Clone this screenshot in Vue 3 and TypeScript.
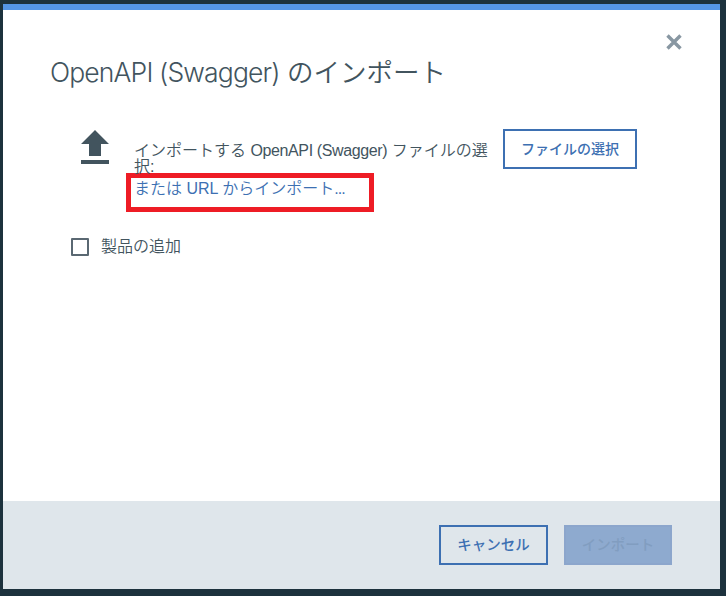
<script setup lang="ts">
import { ref } from 'vue';

const addProduct = ref(false);
const canImport = ref(false);
</script>

<template>
  <div class="backdrop">
    <div class="modal" role="dialog" aria-labelledby="modal-title">
      <header class="modal__header">
        <h1 id="modal-title" class="modal__title">
          <span class="modal__title-latin">OpenAPI (Swagger)</span> のインポート
        </h1>
        <button type="button" class="modal__close" aria-label="閉じる">
          <svg width="16" height="16" viewBox="0 0 16 16">
            <path d="M1.5 1.5L14.5 14.5M14.5 1.5L1.5 14.5" />
          </svg>
        </button>
      </header>

      <main class="modal__body">
        <div class="upload">
          <svg class="upload__icon" width="28" height="34" viewBox="0 0 28 34">
            <path d="M14 0L28 14H20V26H8V14H0Z" />
            <path d="M0 30H28V34H0Z" />
          </svg>
          <div class="upload__text">
            <p class="upload__label">
              インポートする <span class="upload__latin">OpenAPI (Swagger)</span> ファイルの選<br />択:
            </p>
            <div class="upload__highlight">
              <a class="upload__link">または URL からインポート<span class="upload__dots">...</span></a>
            </div>
          </div>
          <button type="button" class="button button--file">ファイルの選択</button>
        </div>

        <label class="product">
          <input v-model="addProduct" type="checkbox" class="product__checkbox" />
          <span>製品の追加</span>
        </label>
      </main>

      <footer class="modal__footer">
        <button type="button" class="button button--cancel">キャンセル</button>
        <button type="button" class="button button--import" :disabled="!canImport">インポート</button>
      </footer>
    </div>
  </div>
</template>

<style>
body {
  margin: 0;
  overflow: hidden;
}
</style>

<style scoped>
.backdrop {
  box-sizing: border-box;
  width: 726px;
  height: 596px;
  padding: 4px 6px 7px 3px;
  background: #1d323d;
  font-family: "Liberation Sans", "Noto Sans CJK JP", sans-serif;
  color: #42545e;
}

.modal {
  box-sizing: border-box;
  display: flex;
  flex-direction: column;
  height: 585px;
  border-top: 6px solid #5596e6;
  background: #fff;
}

.modal__header {
  display: flex;
  justify-content: space-between;
  padding: 24px 38px 0 47px;
}

.modal__title {
  margin: 18px 0 0;
  font-family: Inter, "Noto Sans CJK JP", sans-serif;
  font-size: 26.5px;
  font-weight: 350;
  line-height: 40px;
  white-space: nowrap;
}

.modal__title-latin {
  font-weight: 300;
  letter-spacing: -0.85px;
}

.modal__close {
  width: 16px;
  height: 16px;
  padding: 0;
  border: 0;
  background: none;
  cursor: pointer;
}

.modal__close svg {
  display: block;
  fill: none;
  stroke: #8897a2;
  stroke-width: 3.4;
}

.modal__body {
  flex: 1;
  padding: 37px 48px 0 68px;
}

.upload {
  display: flex;
  align-items: flex-start;
}

.upload__icon {
  flex: none;
  margin: 1px 0 0 10px;
  fill: #42545e;
}

.upload__text {
  width: 369px;
  margin: 14px 0 0 17px;
}

.upload__label {
  width: 358px;
  margin: 0 0 0 8px;
  font-size: 16px;
  font-weight: 350;
  line-height: 16px;
  white-space: nowrap;
}

.upload__latin {
  letter-spacing: -0.38px;
}

.upload__highlight {
  box-sizing: border-box;
  width: 248px;
  height: 39px;
  margin-top: -2px;
  padding: 3px 3px 0;
  border: 5px solid #ee1c25;
}

.upload__link {
  display: block;
  color: #3d70b2;
  font-size: 16px;
  font-weight: 350;
  line-height: 16px;
  white-space: nowrap;
  cursor: pointer;
}

.upload__dots {
  letter-spacing: -1px;
}

.button {
  box-sizing: border-box;
  height: 40px;
  padding: 0 0 3px;
  border: 2px solid #3d70b2;
  background: transparent;
  color: #3d70b2;
  font-family: "Noto Sans CJK JP", sans-serif;
  font-size: 14px;
  font-weight: 500;
  white-space: nowrap;
}

.button--file {
  flex: none;
  width: 134px;
  margin-left: 8px;
}

.button--cancel {
  width: 109px;
  font-size: 14.5px;
}

.button--import {
  width: 108px;
  border-color: #8ca6cc;
  background: #8eaacf;
  color: #819dc0;
  font-size: 14.5px;
}

.product {
  display: inline-flex;
  align-items: center;
  gap: 12px;
  margin-top: 25px;
  font-size: 16px;
  font-weight: 350;
  line-height: 20px;
}

.product__checkbox {
  appearance: none;
  box-sizing: border-box;
  width: 18px;
  height: 18px;
  margin: 0;
  border: 2px solid #5a6872;
  border-radius: 1px;
  background: #fff;
}

.modal__footer {
  box-sizing: border-box;
  display: flex;
  justify-content: flex-end;
  gap: 16px;
  height: 88px;
  padding: 24px 48px 0 0;
  background: #dfe6eb;
}
</style>
